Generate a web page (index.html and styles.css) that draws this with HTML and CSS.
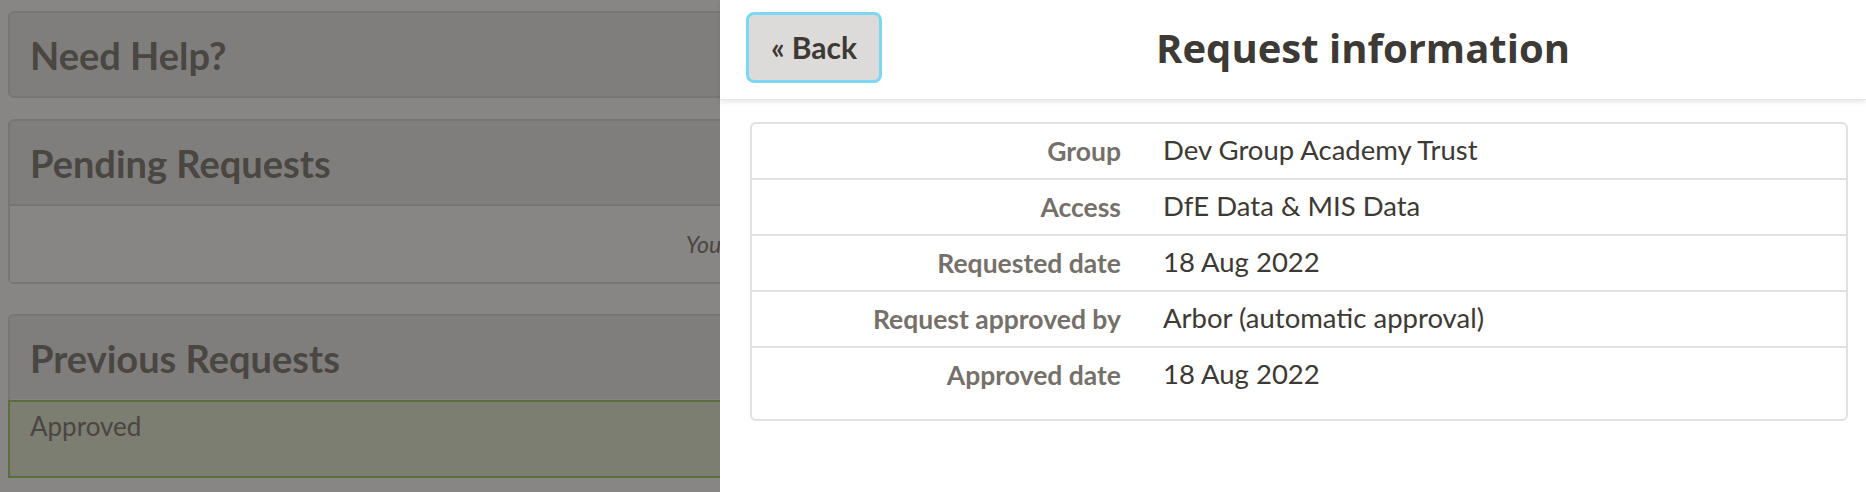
FILE: index.html
```html
<!DOCTYPE html>
<html lang="en">
<head>
<meta charset="utf-8">
<title>Request information</title>
<link rel="stylesheet" href="styles.css">
</head>
<body>
<main class="page">
  <section class="card">
    <header class="card-head"><h2>Need Help?</h2></header>
  </section>
  <section class="card card-pending">
    <header class="card-head"><h2>Pending Requests</h2></header>
    <div class="card-body empty">You currently have no pending data access requests.</div>
  </section>
  <section class="card">
    <header class="card-head"><h2>Previous Requests</h2></header>
    <div class="request approved">Approved</div>
  </section>
</main>
<div class="overlay"></div>
<aside class="drawer">
  <header class="drawer-head">
    <button class="back" type="button">« Back</button>
    <h1 class="drawer-title">Request information</h1>
  </header>
  <div class="drawer-body">
    <div class="info">
      <div class="info-row"><div class="info-label">Group</div><div class="info-value">Dev Group Academy Trust</div></div>
      <div class="info-row"><div class="info-label">Access</div><div class="info-value">DfE Data &amp; MIS Data</div></div>
      <div class="info-row"><div class="info-label">Requested date</div><div class="info-value">18 Aug 2022</div></div>
      <div class="info-row"><div class="info-label">Request approved by</div><div class="info-value">Arbor (automatic approval)</div></div>
      <div class="info-row"><div class="info-label">Approved date</div><div class="info-value">18 Aug 2022</div></div>
    </div>
  </div>
</aside>
</body>
</html>
```
FILE: styles.css
```css
* { box-sizing: border-box; }

html, body { height: 100%; }

body {
  margin: 0;
  font-family: Lato, "Open Sans", "DejaVu Sans", sans-serif;
  background: #fffdf9;
  overflow: hidden;
}

.page {
  padding: 11px 8px 0 8px;
}

.card {
  border: 2px solid #e1dfdb;
  border-radius: 6px;
  background: #fffdf9;
  margin-bottom: 21px;
}

.card-pending {
  margin-bottom: 30px;
}

.card-head {
  height: 83px;
  display: flex;
  align-items: center;
  padding: 0 20px;
  background: #f0eeea;
  border-radius: 4px 4px 0 0;
}

.card-head:only-child {
  border-radius: 4px;
}

.card-head h2 {
  margin: 0;
  font-size: 38px;
  font-weight: 700;
  color: #8c847e;
}

.card-body {
  border-top: 2px solid #e1dfdb;
}

.empty {
  height: 78px;
  display: flex;
  align-items: center;
  justify-content: center;
  font-style: italic;
  font-size: 23px;
  color: #8c847e;
  background: #fffdf9;
}

.request {
  margin: 1px -2px -2px;
  padding: 8px 20px 34px;
  font-size: 26px;
  color: #8c847e;
}

.approved {
  background: #eaeed7;
  border: 2px solid #acce6d;
}

.overlay {
  position: fixed;
  inset: 0;
  background: rgba(0, 0, 0, 0.47);
}

.drawer {
  position: fixed;
  top: 0;
  right: 0;
  bottom: 0;
  width: 1146px;
  background: #fff;
  display: flex;
  flex-direction: column;
}

.drawer-head {
  height: 100px;
  display: flex;
  align-items: center;
  padding: 12px 22px 17px 26px;
  background: #fff;
  border-bottom: 1px solid #e8e8e8;
  box-shadow: 0 2px 5px rgba(0, 0, 0, 0.10);
}

.back {
  width: 136px;
  height: 71px;
  flex: none;
  border: 3px solid #7bd8f2;
  border-radius: 8px;
  background: #dddbd9;
  color: #3d3935;
  font-family: Lato, "Open Sans", sans-serif;
  font-weight: 700;
  font-size: 30px;
  padding: 0;
}

.drawer-title {
  flex: 1;
  margin: 0;
  text-align: center;
  font-family: "Open Sans", Lato, sans-serif;
  font-weight: 700;
  font-size: 40px;
  color: #3d3935;
  line-height: 1.3;
  padding-top: 2px;
}

.drawer-body {
  padding: 22px 18px 0 30px;
}

.info {
  border: 2px solid #e1e1e1;
  border-radius: 6px;
  padding-bottom: 17px;
}

.info-row {
  display: grid;
  grid-template-columns: 390px 1fr;
  height: 56px;
  align-items: center;
  border-top: 2px solid #e1e1e1;
}

.info-row:first-child {
  border-top: 0;
  height: 54px;
}

.info-label {
  text-align: right;
  padding-right: 21px;
  font-weight: 700;
  font-size: 26.5px;
  color: #76706b;
}

.info-value {
  padding-left: 21px;
  font-size: 27.5px;
  color: #3d3935;
  padding-bottom: 3px;
}
```
